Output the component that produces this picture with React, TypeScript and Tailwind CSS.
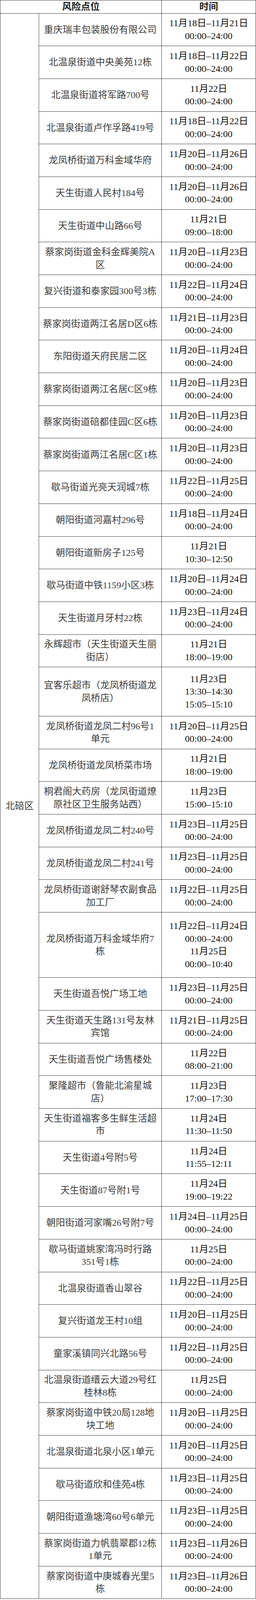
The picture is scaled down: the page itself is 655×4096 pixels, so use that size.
type Row = { place: string[]; time: string[]; size?: "md" | "lg" };

const d = (a: string) => ["11月" + a, "00:00–24:00"];

const rows: Row[] = [
  { place: ["重庆瑞丰包装股份有限公司"], time: d("18日–11月21日") },
  { place: ["北温泉街道中央美苑12栋"], time: d("18日–11月22日") },
  { place: ["北温泉街道将军路700号"], time: d("22日") },
  { place: ["北温泉街道卢作孚路419号"], time: d("18日–11月22日") },
  { place: ["龙凤桥街道万科金域华府"], time: d("20日–11月26日") },
  { place: ["天生街道人民村184号"], time: d("20日–11月26日") },
  { place: ["天生街道中山路66号"], time: ["11月21日", "09:00–18:00"] },
  { place: ["蔡家岗街道金科金辉美院A", "区"], time: d("20日–11月23日") },
  { place: ["复兴街道和泰家园300号3栋"], time: d("22日–11月24日") },
  { place: ["蔡家岗街道两江名居D区6栋"], time: d("21日–11月23日") },
  { place: ["东阳街道天府民居二区"], time: d("20日–11月24日") },
  { place: ["蔡家岗街道两江名居C区9栋"], time: d("20日–11月23日") },
  { place: ["蔡家岗街道碚都佳园C区6栋"], time: d("20日–11月23日") },
  { place: ["蔡家岗街道两江名居C区1栋"], time: d("20日–11月23日") },
  { place: ["歇马街道光亮天润城7栋"], time: d("22日–11月25日") },
  { place: ["朝阳街道河嘉村296号"], time: d("18日–11月24日") },
  { place: ["朝阳街道新房子125号"], time: ["11月21日", "10:30–12:50"] },
  { place: ["歇马街道中铁1159小区3栋"], time: d("20日–11月24日") },
  { place: ["天生街道月牙村22栋"], time: d("23日–11月24日") },
  { place: ["永辉超市（天生街道天生丽", "街店）"], time: ["11月21日", "18:00–19:00"] },
  {
    place: ["宜客乐超市（龙凤桥街道龙", "凤桥店）"],
    time: ["11月23日", "13:30–14:30", "15:05–15:10"],
    size: "md",
  },
  { place: ["龙凤桥街道龙凤二村96号1", "单元"], time: d("20日–11月25日") },
  { place: ["龙凤桥街道龙凤桥菜市场"], time: ["11月21日", "18:00–19:00"] },
  { place: ["桐君阁大药房（龙凤街道燎", "原社区卫生服务站西）"], time: ["11月23日", "15:00–15:10"] },
  { place: ["龙凤桥街道龙凤二村240号"], time: d("23日–11月25日") },
  { place: ["龙凤桥街道龙凤二村241号"], time: d("23日–11月25日") },
  { place: ["龙凤桥街道谢舒琴农副食品", "加工厂"], time: d("22日–11月25日") },
  {
    place: ["龙凤桥街道万科金域华府7", "栋"],
    time: ["11月22日–11月24日", "00:00–24:00", "11月25日", "00:00–10:40"],
    size: "lg",
  },
  { place: ["天生街道吾悦广场工地"], time: d("23日–11月25日") },
  { place: ["天生街道天生路131号友林", "宾馆"], time: d("21日–11月25日") },
  { place: ["天生街道吾悦广场售楼处"], time: ["11月22日", "08:00–21:00"] },
  { place: ["聚隆超市（鲁能北渝星城", "店）"], time: ["11月23日", "17:00–17:30"] },
  { place: ["天生街道福客多生鲜生活超", "市"], time: ["11月24日", "11:30–11:50"] },
  { place: ["天生街道4号附5号"], time: ["11月24日", "11:55–12:11"] },
  { place: ["天生街道87号附1号"], time: ["11月24日", "19:00–19:22"] },
  { place: ["朝阳街道河家嘴26号附7号"], time: d("24日–11月25日") },
  { place: ["歇马街道姚家湾冯时行路", "351号1栋"], time: d("25日") },
  { place: ["北温泉街道香山翠谷"], time: d("22日–11月25日") },
  { place: ["复兴街道龙王村10组"], time: d("20日–11月25日") },
  { place: ["童家溪镇同兴北路56号"], time: d("22日–11月25日") },
  { place: ["北温泉街道缙云大道29号红", "桂林8栋"], time: d("25日") },
  { place: ["蔡家岗街道中铁20局128地", "块工地"], time: d("20日–11月25日") },
  { place: ["北温泉街道北泉小区1单元"], time: d("20日–11月25日") },
  { place: ["歇马街道欣和佳苑4栋"], time: d("23日–11月25日") },
  { place: ["朝阳街道渔塘湾60号6单元"], time: d("23日–11月25日") },
  { place: ["蔡家岗街道力帆翡翠郡12栋", "1单元"], time: d("23日–11月26日") },
  { place: ["蔡家岗街道中庚城春光里5", "栋"], time: d("23日–11月26日") },
];

const cell = "border border-[#3a3a3a] text-center align-middle";

export default function App() {
  return (
    <div className="w-[655px] bg-white font-['Liberation_Serif','Noto_Sans_CJK_SC',serif] text-[24px] leading-[32.5px]">
      <table className="w-[655px] table-fixed border-collapse">
        <colgroup>
          <col className="w-[99px]" />
          <col className="w-[314px]" />
          <col />
        </colgroup>
        <tbody>
          <tr className="h-[32.8px]">
            <td colSpan={2} className={cell + " font-bold text-[#222]"}>
              风险点位
            </td>
            <td className={cell + " font-bold text-[#222]"}>时间</td>
          </tr>
          {rows.map((r, i) => (
            <tr
              key={i}
              className={
                r.size === "lg" ? "h-[167.4px]" : r.size === "md" ? "h-[125.6px]" : "h-[83.7px]"
              }
            >
              {i === 0 && (
                <td rowSpan={rows.length} className={cell + " text-[#3a3a3a]"}>
                  北碚区
                </td>
              )}
              <td className={cell + " px-1 text-[#3d3d3d]"}>
                {r.place.map((l, j) => (
                  <div key={j} className="whitespace-nowrap">
                    {l}
                  </div>
                ))}
              </td>
              <td className={cell + " text-[#111]"}>
                {r.time.map((l, j) => (
                  <div key={j} className="whitespace-nowrap">
                    {l}
                  </div>
                ))}
              </td>
            </tr>
          ))}
        </tbody>
      </table>
    </div>
  );
}
